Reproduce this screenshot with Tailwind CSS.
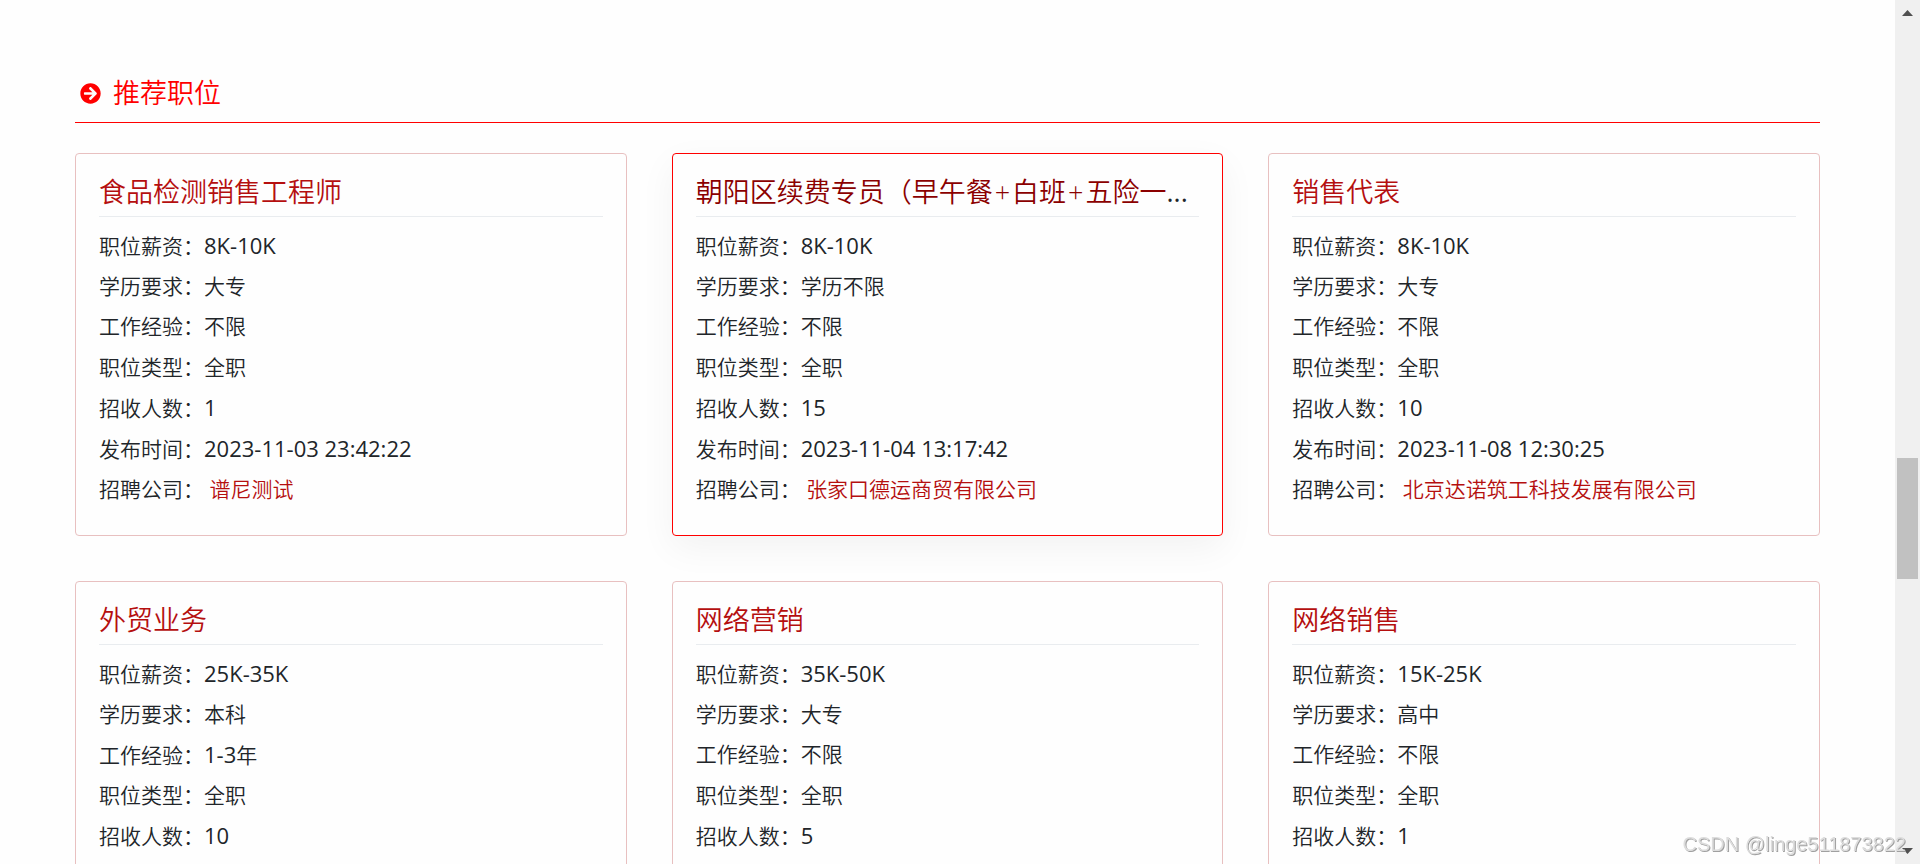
<!DOCTYPE html>
<html lang="zh-CN">
  <head>
    <meta charset="UTF-8" />
    <meta name="viewport" content="width=device-width, initial-scale=1" />
    <title>推荐职位</title>
    <script src="https://cdn.jsdelivr.net/npm/@tailwindcss/browser@4"></script>
  </head>
  <body class="flex h-screen overflow-hidden bg-[#fefefe] font-['Open_Sans','Noto_Sans_CJK_SC',sans-serif] font-[350] text-[#212529]">
    <main class="min-w-0 flex-1 overflow-hidden pt-16 pr-[75px] pl-[75px]">
      <h2 class="flex items-center gap-3 border-b border-[#ff0000] pl-[5px] text-[27px] leading-[58px] text-[#ff0000]">
        <svg class="size-[21px]" viewBox="0 0 512 512" fill="currentColor" aria-hidden="true">
          <path d="M256 8c137 0 248 111 248 248S393 504 256 504 8 393 8 256 119 8 256 8zm-28.900 143.600l75.500 72.400H120c-13.300 0-24 10.700-24 24v16c0 13.300 10.700 24 24 24h182.600l-75.500 72.400c-9.700 9.300-9.900 24.800-.4 34.300l11 10.900c9.400 9.400 24.600 9.400 33.900 0L404.300 273c9.400-9.400 9.400-24.600 0-33.900L271.600 106.300c-9.400-9.400-24.600-9.400-33.900 0l-11 10.900c-9.500 9.600-9.300 25.100.4 34.400z" />
        </svg>
        推荐职位
      </h2>

      <div class="mt-[30px] grid grid-cols-3 gap-[45px]">
        <article class="min-w-0 rounded border border-[#e8c0c0] px-[23px] pt-[14px] pb-[26px]">
          <h3 class="truncate border-b border-[#e9ecef] text-[27px] leading-[48px]"><a href="#" class="text-[#b50f0f]">食品检测销售工程师</a></h3>
          <ul class="mt-2 grid h-[284px] grid-rows-7 items-center text-[21px] leading-8">
            <li>职位薪资：<span class="text-[22px] font-normal">8K-10K</span></li>
            <li>学历要求：大专</li>
            <li>工作经验：不限</li>
            <li>职位类型：全职</li>
            <li>招收人数：<span class="text-[22px] font-normal">1</span></li>
            <li>发布时间：<span class="text-[22px] font-normal">2023-11-03 23:42:22</span></li>
            <li>招聘公司： <a href="#" class="text-[#b50f0f]">谱尼测试</a></li>
          </ul>
        </article>

        <!-- active card -->
        <article class="min-w-0 rounded border border-[#ff0000] px-[23px] pt-[14px] pb-[26px] shadow-[0_12px_36px_rgba(0,0,0,0.05)]">
          <h3 class="truncate border-b border-[#e9ecef] text-[27px] leading-[48px] font-normal"><a href="#" class="font-[350] text-[#8b0000]">朝阳区续费专员（早午餐<span class="px-0.5">+</span>白班<span class="px-0.5">+</span>五险一</a>...</h3>
          <ul class="mt-2 grid h-[284px] grid-rows-7 items-center text-[21px] leading-8">
            <li>职位薪资：<span class="text-[22px] font-normal">8K-10K</span></li>
            <li>学历要求：学历不限</li>
            <li>工作经验：不限</li>
            <li>职位类型：全职</li>
            <li>招收人数：<span class="text-[22px] font-normal">15</span></li>
            <li>发布时间：<span class="text-[22px] font-normal">2023-11-04 13:17:42</span></li>
            <li>招聘公司： <a href="#" class="text-[#b50f0f]">张家口德运商贸有限公司</a></li>
          </ul>
        </article>

        <article class="min-w-0 rounded border border-[#e8c0c0] px-[23px] pt-[14px] pb-[26px]">
          <h3 class="truncate border-b border-[#e9ecef] text-[27px] leading-[48px]"><a href="#" class="text-[#b50f0f]">销售代表</a></h3>
          <ul class="mt-2 grid h-[284px] grid-rows-7 items-center text-[21px] leading-8">
            <li>职位薪资：<span class="text-[22px] font-normal">8K-10K</span></li>
            <li>学历要求：大专</li>
            <li>工作经验：不限</li>
            <li>职位类型：全职</li>
            <li>招收人数：<span class="text-[22px] font-normal">10</span></li>
            <li>发布时间：<span class="text-[22px] font-normal">2023-11-08 12:30:25</span></li>
            <li>招聘公司： <a href="#" class="text-[#b50f0f]">北京达诺筑工科技发展有限公司</a></li>
          </ul>
        </article>

        <article class="min-w-0 rounded border border-[#e8c0c0] px-[23px] pt-[14px] pb-[26px]">
          <h3 class="truncate border-b border-[#e9ecef] text-[27px] leading-[48px]"><a href="#" class="text-[#b50f0f]">外贸业务</a></h3>
          <ul class="mt-2 grid h-[284px] grid-rows-7 items-center text-[21px] leading-8">
            <li>职位薪资：<span class="text-[22px] font-normal">25K-35K</span></li>
            <li>学历要求：本科</li>
            <li>工作经验：<span class="text-[22px] font-normal">1-3</span>年</li>
            <li>职位类型：全职</li>
            <li>招收人数：<span class="text-[22px] font-normal">10</span></li>
          </ul>
        </article>

        <article class="min-w-0 rounded border border-[#e8c0c0] px-[23px] pt-[14px] pb-[26px]">
          <h3 class="truncate border-b border-[#e9ecef] text-[27px] leading-[48px]"><a href="#" class="text-[#b50f0f]">网络营销</a></h3>
          <ul class="mt-2 grid h-[284px] grid-rows-7 items-center text-[21px] leading-8">
            <li>职位薪资：<span class="text-[22px] font-normal">35K-50K</span></li>
            <li>学历要求：大专</li>
            <li>工作经验：不限</li>
            <li>职位类型：全职</li>
            <li>招收人数：<span class="text-[22px] font-normal">5</span></li>
          </ul>
        </article>

        <article class="min-w-0 rounded border border-[#e8c0c0] px-[23px] pt-[14px] pb-[26px]">
          <h3 class="truncate border-b border-[#e9ecef] text-[27px] leading-[48px]"><a href="#" class="text-[#b50f0f]">网络销售</a></h3>
          <ul class="mt-2 grid h-[284px] grid-rows-7 items-center text-[21px] leading-8">
            <li>职位薪资：<span class="text-[22px] font-normal">15K-25K</span></li>
            <li>学历要求：高中</li>
            <li>工作经验：不限</li>
            <li>职位类型：全职</li>
            <li>招收人数：<span class="text-[22px] font-normal">1</span></li>
          </ul>
        </article>
      </div>
    </main>

    <!-- scrollbar -->
    <div class="flex h-screen w-[25px] shrink-0 flex-col items-center bg-[#f0f0f0] pt-[10px] pb-[10px]" aria-hidden="true">
      <svg class="h-[6px] w-[11px]" viewBox="0 0 11 6" fill="#505050"><path d="M0 6L5.500 0L11 6z" /></svg>
      <div class="flex w-full flex-1 flex-col items-center">
        <div class="grow-[442]"></div>
        <div class="h-[121px] w-[21px] bg-[#c1c1c1]"></div>
        <div class="grow-[269]"></div>
      </div>
      <svg class="h-[6px] w-[11px]" viewBox="0 0 11 6" fill="#505050"><path d="M0 0L5.500 6L11 0z" /></svg>
    </div>

    <div class="fixed right-[14px] bottom-[6px] font-['Liberation_Sans',sans-serif] text-xl leading-7 font-normal text-[#dddddd] [text-shadow:1px_1px_0_#a0a0a0]">CSDN @linge511873822</div>
  </body>
</html>
